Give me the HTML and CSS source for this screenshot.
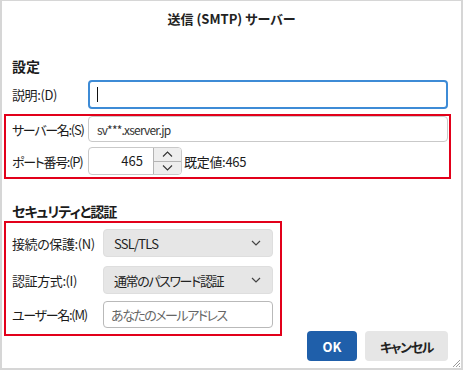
FILE: index.html
```html
<!DOCTYPE html>
<html lang="ja">
<head>
    <meta charset="UTF-8">
    <meta name="viewport" content="width=device-width, initial-scale=1.0">
    <title>送信 (SMTP) サーバー</title>
    <link rel="stylesheet" href="styles.css">
</head>
<body>
    <div class="window">
        <div class="title">送信 (SMTP) サーバー</div>

        <div class="content">
            <h2 class="section-title">設定</h2>

            <div class="row row-desc">
                <label class="label" for="desc">説明:(D)</label>
                <div class="field field-focus" id="desc"><span class="caret"></span></div>
            </div>

            <div class="mark mark-server">
                <div class="row row-server">
                    <label class="label kana">サーバー名:(S)</label>
                    <div class="field field-plain field-latin">sv***.xserver.jp</div>
                </div>
                <div class="row row-port">
                    <label class="label kana">ポート番号:(P)</label>
                    <div class="spin">
                        <div class="spin-value">465</div>
                        <div class="spin-buttons">
                            <span class="spin-btn">
                                <svg width="11" height="6" viewBox="0 0 11 6"><path d="M1 5.5 L5.5 1 L10 5.5" fill="none" stroke="#333" stroke-width="1.1"/></svg>
                            </span>
                            <span class="spin-btn">
                                <svg width="11" height="6" viewBox="0 0 11 6"><path d="M1 0.5 L5.5 5 L10 0.5" fill="none" stroke="#333" stroke-width="1.1"/></svg>
                            </span>
                        </div>
                    </div>
                    <span class="hint">既定値:465</span>
                </div>
            </div>

            <h2 class="section-title section-security">セキュリティと認証</h2>

            <div class="mark mark-security">
                <div class="row row-select">
                    <label class="label label-wide">接続の保護:(N)</label>
                    <div class="select">
                        <span>SSL/TLS</span>
                        <svg width="10" height="6" viewBox="0 0 10 6"><path d="M1 1 L5 5 L9 1" fill="none" stroke="#444" stroke-width="1.2"/></svg>
                    </div>
                </div>
                <div class="row row-select">
                    <label class="label label-wide">認証方式:(I)</label>
                    <div class="select select-kana">
                        <span>通常のパスワード認証</span>
                        <svg width="10" height="6" viewBox="0 0 10 6"><path d="M1 1 L5 5 L9 1" fill="none" stroke="#444" stroke-width="1.2"/></svg>
                    </div>
                </div>
                <div class="row row-user">
                    <label class="label label-wide kana">ユーザー名:(M)</label>
                    <div class="field field-plain field-user">あなたのメールアドレス</div>
                </div>
            </div>

            <div class="footer">
                <button class="btn btn-primary">OK</button>
                <button class="btn btn-cancel">キャンセル</button>
            </div>
        </div>

        <svg class="grip" width="9" height="9" viewBox="0 0 9 9">
            <path d="M8 1 L1 8 M8 4 L4 8 M8 7 L7 8" stroke="#9a9a9a" stroke-width="1"/>
        </svg>
    </div>
</body>
</html>
```

FILE: styles.css
```css
* {
    box-sizing: border-box;
}
body {
    margin: 0;
    font-family: "Noto Sans CJK JP", "Noto Sans", sans-serif;
    font-feature-settings: "palt";
    font-size: 13px;
    color: #1b1b1b;
    background: white;
}
.window {
    position: relative;
    width: 463px;
    height: 370px;
    border-top: 1px solid #d6d6d6;
    border-left: 2px solid #d6d6d6;
    border-right: 2px solid #d6d6d6;
    border-bottom: 2px solid #d6d6d6;
    background: white;
}
.title {
    height: 35px;
    line-height: 35px;
    text-align: center;
    font-weight: bold;
    font-size: 13px;
    color: #222;
}
.content {
    padding: 0 13px 0 10px;
}
.section-title {
    margin: 20px 0 0;
    font-size: 14px;
    font-weight: bold;
    line-height: 20px;
}
.section-security {
    margin-top: 22px;
    letter-spacing: -1px;
}
.row {
    display: flex;
    align-items: center;
}
.label {
    width: 76px;
    flex-shrink: 0;
    white-space: nowrap;
    letter-spacing: -0.4px;
}
.label.kana {
    letter-spacing: -1.3px;
}
.label-wide {
    width: 91px;
}
.row-desc {
    margin-top: 4px;
}
.field {
    flex: 1;
    height: 27px;
    border: 1px solid #c9c9c9;
    border-radius: 4px;
    padding: 0 8px;
    display: flex;
    align-items: center;
    color: #333;
}
.field-focus {
    height: 29px;
    border: 2px solid #3d8bd6;
    padding: 0 7px;
}
.field-latin {
    font-size: 12px;
    letter-spacing: -0.8px;
}
.caret {
    width: 1px;
    height: 15px;
    background: #111;
}
.mark {
    border: 2px solid #e2001a;
    margin-left: -8px;
    padding-left: 6px;
}
.mark-server {
    margin-top: 5px;
    margin-right: -3px;
    padding-right: 1px;
    padding-bottom: 2px;
}
.row-server .field {
    height: 26px;
}
.row-port {
    margin-top: 5px;
}
.spin {
    display: flex;
    width: 94px;
    height: 28px;
    border: 1px solid #c9c9c9;
    border-radius: 4px;
    overflow: hidden;
}
.spin-value {
    flex: 1;
    text-align: right;
    padding-right: 10px;
    line-height: 26px;
}
.spin-buttons {
    width: 28px;
    display: flex;
    flex-direction: column;
    border-left: 1px solid #b4b4b4;
}
.spin-btn {
    flex: 1;
    display: flex;
    align-items: center;
    justify-content: center;
    background: #eeeeee;
}
.spin-btn + .spin-btn {
    border-top: 1px solid #b4b4b4;
}
.hint {
    margin-left: 2px;
    letter-spacing: -0.3px;
}
.mark-security {
    width: 278px;
    padding: 6px 7px 6px 6px;
}
.select {
    flex: 1;
    height: 28px;
    background: #e6e6e6;
    border: 1px solid #dedede;
    border-radius: 4px;
    display: flex;
    align-items: center;
    justify-content: space-between;
    padding: 0 11px 0 10px;
    font-size: 13px;
    letter-spacing: -0.8px;
    color: #222;
}
.select-kana {
    letter-spacing: -1.4px;
}
.row-select + .row-select {
    margin-top: 9px;
}
.row-user {
    margin-top: 7px;
}
.field-user {
    height: 27px;
    border-color: #b9b9b9;
    color: #666;
    padding-left: 7px;
    letter-spacing: -1.5px;
}
.footer {
    display: flex;
    justify-content: flex-end;
    gap: 8px;
    margin-top: -5px;
}
.btn {
    height: 30px;
    min-width: 50px;
    padding: 0;
    border: none;
    border-radius: 4px;
    background: #e6e6e6;
    font-family: inherit;
    font-feature-settings: "palt";
    font-size: 13px;
    font-weight: bold;
    color: #222;
}
.btn-primary {
    width: 50px;
    background: #1f5faa;
    color: white;
}
.btn-cancel {
    width: 83px;
    letter-spacing: -1.4px;
}
.grip {
    position: absolute;
    right: 0;
    bottom: 0;
}
```
